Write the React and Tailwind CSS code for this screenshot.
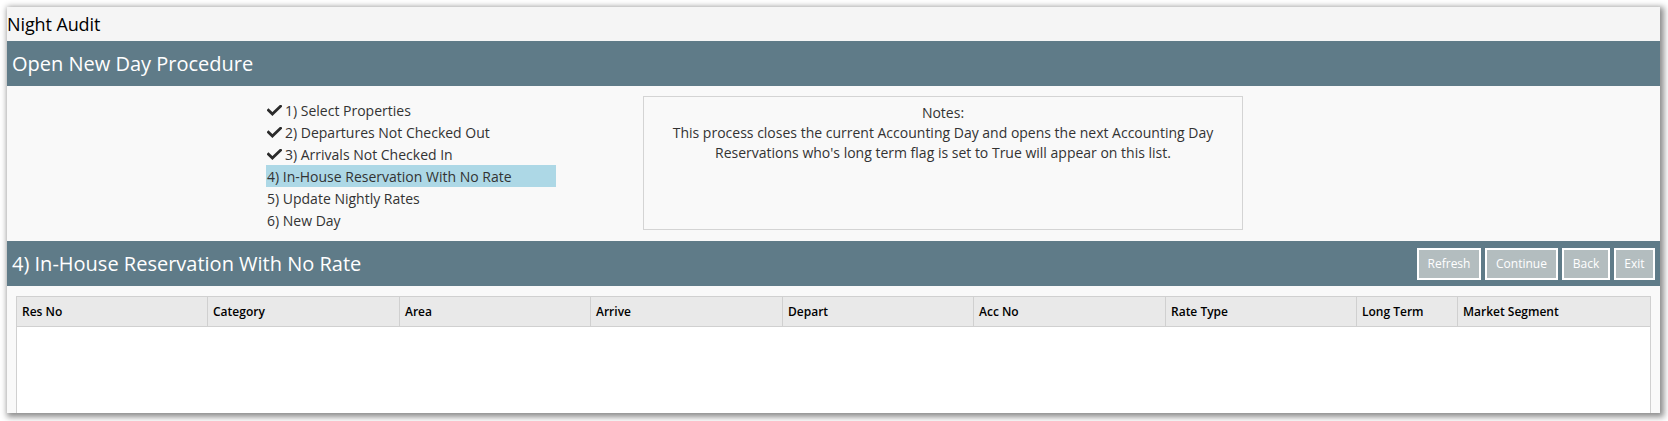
import React from "react";

const steps = [
  { label: "1) Select Properties", done: true },
  { label: "2) Departures Not Checked Out", done: true },
  { label: "3) Arrivals Not Checked In", done: true },
  { label: "4) In-House Reservation With No Rate", active: true },
  { label: "5) Update Nightly Rates" },
  { label: "6) New Day" },
];

const cols = [
  "Res No",
  "Category",
  "Area",
  "Arrive",
  "Depart",
  "Acc No",
  "Rate Type",
  "Long Term",
  "Market Segment",
];

function Check() {
  return (
    <svg width="15" height="11" viewBox="0 0 15 11" className="shrink-0">
      <path d="M1.5 5.2 L5.4 9 L13.6 1.2" fill="none" stroke="#2b2b2b" strokeWidth="2.8" strokeLinecap="square" />
    </svg>
  );
}

export default function App() {
  return (
    <div
      className="w-[1668px] h-[421px] bg-white pt-[7px] pl-[7px] overflow-hidden"
      style={{ fontFamily: '"Open Sans", "Noto Sans", sans-serif' }}
    >
      <div className="w-[1653px] h-[406px] flex flex-col bg-[#f9f9f9] shadow-[2px_2px_6px_2px_rgba(0,0,0,0.45)] overflow-hidden">
        <div className="h-[34px] shrink-0 flex items-center bg-[#f5f5f5] text-[18px] text-black tracking-[-0.1px]">
          Night Audit
        </div>
        <div className="h-[45px] shrink-0 flex items-center bg-[#5f7b88] pl-[5px] text-white text-[20px]">
          Open New Day Procedure
        </div>
        <div className="h-[155px] shrink-0 flex items-start pl-[259px]">
          <div className="mt-[13px] w-[290px] flex flex-col">
            {steps.map((s) => (
              <div
                key={s.label}
                className={
                  "h-[22px] flex items-center gap-[3px] pl-[1px] text-[14px] text-[#333] " +
                  (s.active ? "bg-[#add8e6]" : "")
                }
              >
                {s.done && <Check />}
                <span>{s.label}</span>
              </div>
            ))}
          </div>
          <div className="ml-[87px] mt-[10px] w-[600px] h-[134px] border border-[#d4d4d4] pt-[6px] text-center text-[14px] leading-[20px] text-[#333]">
            <div>Notes:</div>
            <div>This process closes the current Accounting Day and opens the next Accounting Day</div>
            <div>Reservations who's long term flag is set to True will appear on this list.</div>
          </div>
        </div>
        <div className="h-[45px] shrink-0 flex items-center justify-between bg-[#5f7b88] pl-[5px] pr-[5px]">
          <span className="text-white text-[20px]">4) In-House Reservation With No Rate</span>
          <div className="flex gap-[4px]">
            <button className="w-[64px] h-[32px] border-2 border-white bg-[#b3bdbf] text-white text-[12px]">Refresh</button>
            <button className="w-[73px] h-[32px] border-2 border-white bg-[#b3bdbf] text-white text-[12px]">Continue</button>
            <button className="w-[48px] h-[32px] border-2 border-white bg-[#b3bdbf] text-white text-[12px]">Back</button>
            <button className="w-[41px] h-[32px] border-2 border-white bg-[#b3bdbf] text-white text-[12px]">Exit</button>
          </div>
        </div>
        <div className="flex-1 pt-[10px] px-[9px]">
          <div className="h-[200px] border border-[#d0d0d0] bg-white">
            <div className="grid grid-cols-[191px_192px_191px_192px_191px_192px_191px_101px_1fr] h-[30px] bg-[#e9e9e9] border-b border-[#d0d0d0]">
              {cols.map((c, i) => (
                <div
                  key={c}
                  className={
                    "flex items-center px-[5px] text-[12px] font-semibold text-black " +
                    (i < cols.length - 1 ? "border-r border-[#d0d0d0]" : "")
                  }
                >
                  {c}
                </div>
              ))}
            </div>
          </div>
        </div>
      </div>
    </div>
  );
}
